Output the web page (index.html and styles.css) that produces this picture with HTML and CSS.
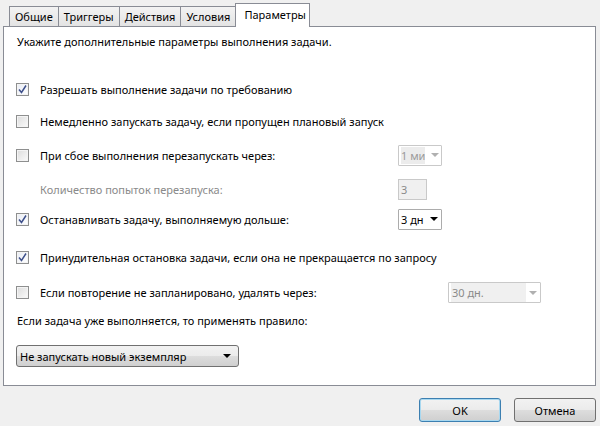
FILE: index.html
```
<!DOCTYPE html>
<html lang="ru">
<head>
    <meta charset="UTF-8">
    <title>Параметры задачи</title>
    <link rel="stylesheet" href="styles.css">
</head>
<body>
<div class="dialog">
    <div class="tabs">
        <div class="tab">Общие</div>
        <div class="tab">Триггеры</div>
        <div class="tab">Действия</div>
        <div class="tab">Условия</div>
        <div class="tab active">Параметры</div>
    </div>
    <div class="panel">
        <div class="intro">Укажите дополнительные параметры выполнения задачи.</div>

        <div class="row r1">
            <span class="check on"><svg width="11" height="11" viewBox="0 0 11 11"><path d="M2 5.5 L4.5 8.5 L9 1.5" fill="none" stroke="#3d4f8a" stroke-width="1.5"/></svg></span>
            <span class="label">Разрешать выполнение задачи по требованию</span>
        </div>
        <div class="row r2">
            <span class="check"></span>
            <span class="label">Немедленно запускать задачу, если пропущен плановый запуск</span>
        </div>
        <div class="row r3">
            <span class="check"></span>
            <span class="label">При сбое выполнения перезапускать через:</span>
            <div class="combo small disabled"><span class="val sel">1 ми</span><span class="arrow"></span></div>
        </div>
        <div class="row r4">
            <span class="label sub">Количество попыток перезапуска:</span>
            <div class="spin disabled">3</div>
        </div>
        <div class="row r5">
            <span class="check on"><svg width="11" height="11" viewBox="0 0 11 11"><path d="M2 5.5 L4.5 8.5 L9 1.5" fill="none" stroke="#3d4f8a" stroke-width="1.5"/></svg></span>
            <span class="label">Останавливать задачу, выполняемую дольше:</span>
            <div class="combo small"><span class="val">3 дн</span><span class="arrow"></span></div>
        </div>
        <div class="row r6">
            <span class="check on"><svg width="11" height="11" viewBox="0 0 11 11"><path d="M2 5.5 L4.5 8.5 L9 1.5" fill="none" stroke="#3d4f8a" stroke-width="1.5"/></svg></span>
            <span class="label">Принудительная остановка задачи, если она не прекращается по запросу</span>
        </div>
        <div class="row r7">
            <span class="check"></span>
            <span class="label">Если повторение не запланировано, удалять через:</span>
            <div class="combo wide disabled"><span class="val">30 дн.</span><span class="arrow"></span></div>
        </div>
        <div class="rule">Если задача уже выполняется, то применять правило:</div>
        <div class="drop"><span>Не запускать новый экземпляр</span><span class="arrow"></span></div>
    </div>
    <div class="buttons">
        <button class="btn default">OK</button>
        <button class="btn">Отмена</button>
    </div>
</div>
</body>
</html>
```
FILE: styles.css
```
body {
    margin: 0;
    background: #f0f0f0;
    font-family: "Noto Sans", "Open Sans", sans-serif;
    font-size: 11px;
    color: #000;
}
.dialog {
    width: 600px;
    height: 426px;
    overflow: hidden;
}
.tabs {
    display: flex;
    align-items: flex-end;
    height: 26px;
    padding-left: 9px;
    box-sizing: border-box;
}
.tab {
    height: 20px;
    line-height: 19px;
    padding: 0 5px;
    margin-right: -1px;
    border: 1px solid #898c95;
    border-bottom: none;
    background: linear-gradient(#f3f3f3, #e3e3e3);
    box-sizing: border-box;
    position: relative;
}
.tab.active {
    width: 75px;
    height: 24px;
    line-height: 21px;
    padding: 0 0 0 8px;
    background: #fff;
    margin-bottom: -1px;
    z-index: 2;
}
.panel {
    margin: 0 4px 0 3px;
    height: 360px;
    background: #fff;
    border: 1px solid #898c95;
    box-sizing: border-box;
    position: relative;
    z-index: 1;
    padding: 7px 0 0 12px;
}
.intro {
    height: 16px;
    line-height: 16px;
    padding-left: 1px;
}
.row {
    display: flex;
    align-items: center;
}
.r1 { margin-top: 23px; height: 32px; }
.r2 { height: 32px; }
.r3 { height: 36px; }
.r4 { height: 32px; }
.r5 { height: 28px; }
.r6 { height: 36px; margin-top: 6px; }
.r7 { height: 35px; }
.check {
    width: 13px;
    height: 13px;
    box-sizing: border-box;
    border: 1px solid #8e8f8f;
    background: linear-gradient(135deg, #dcdcdc, #fbfbfb);
    box-shadow: inset 0 0 0 1px #f4f4f4;
    display: flex;
    align-items: center;
    justify-content: center;
    margin-right: 11px;
    flex: none;
}
.check.on {
    background: linear-gradient(135deg, #e8ecf4, #ffffff);
}
.label {
    white-space: nowrap;
}
.label.sub {
    margin-left: 24px;
    color: #8a8a8a;
    width: 358px;
}
.r3 .label, .r5 .label {
    width: 358px;
}
.r7 .label {
    width: 408px;
}
.combo {
    height: 21px;
    box-sizing: border-box;
    border: 1px solid #acacac;
    background: #fff;
    display: flex;
    align-items: center;
    padding: 0 3px 0 2px;
    border-radius: 1px;
}
.combo.small {
    width: 44px;
}
.combo.wide {
    width: 93px;
}
.combo .val {
    flex: 1;
    overflow: hidden;
    white-space: nowrap;
}
.combo.disabled {
    border-color: #c9c9c9;
    color: #8a8a8a;
}
.combo.wide.disabled .val {
    background: #f0f0f0;
    color: #8a8a8a;
    padding-left: 1px;
    line-height: 19px;
}
.combo .val.sel {
    flex: none;
    background: #ececec;
    color: #9a9a9a;
    line-height: 17px;
}
.combo.small.disabled .val.sel {
    width: 24px;
    margin-right: 3px;
}
.arrow {
    width: 0;
    height: 0;
    border-left: 4px solid transparent;
    border-right: 4px solid transparent;
    border-top: 4px solid #000;
    margin-left: 3px;
    flex: none;
}
.disabled .arrow {
    border-top-color: #b0b0b0;
}
.spin {
    width: 29px;
    height: 21px;
    box-sizing: border-box;
    border: 1px solid #c9c9c9;
    background: #f0f0f0;
    color: #8a8a8a;
    padding-left: 2px;
    line-height: 19px;
}
.rule {
    margin-top: 3px;
    height: 16px;
    line-height: 16px;
    padding-left: 1px;
}
.drop {
    margin-top: 16px;
    width: 223px;
    height: 22px;
    box-sizing: border-box;
    border: 1px solid #707070;
    border-radius: 3px;
    background: linear-gradient(#f2f2f2 0%, #ebebeb 50%, #dddddd 51%, #cfcfcf 100%);
    display: flex;
    align-items: center;
    justify-content: space-between;
    padding: 0 7px 0 3px;
}
.buttons {
    display: flex;
    justify-content: flex-end;
    gap: 13px;
    padding: 12px 4px 0 0;
}
.btn {
    width: 82px;
    height: 24px;
    font-family: inherit;
    font-size: 11px;
    border: 1px solid #707070;
    border-radius: 3px;
    background: linear-gradient(#f2f2f2 0%, #ebebeb 50%, #dddddd 51%, #cfcfcf 100%);
    padding: 0;
}
.btn.default {
    border-color: #3c7fb1;
    box-shadow: inset 0 0 0 1px #a8d8f0;
}
```
